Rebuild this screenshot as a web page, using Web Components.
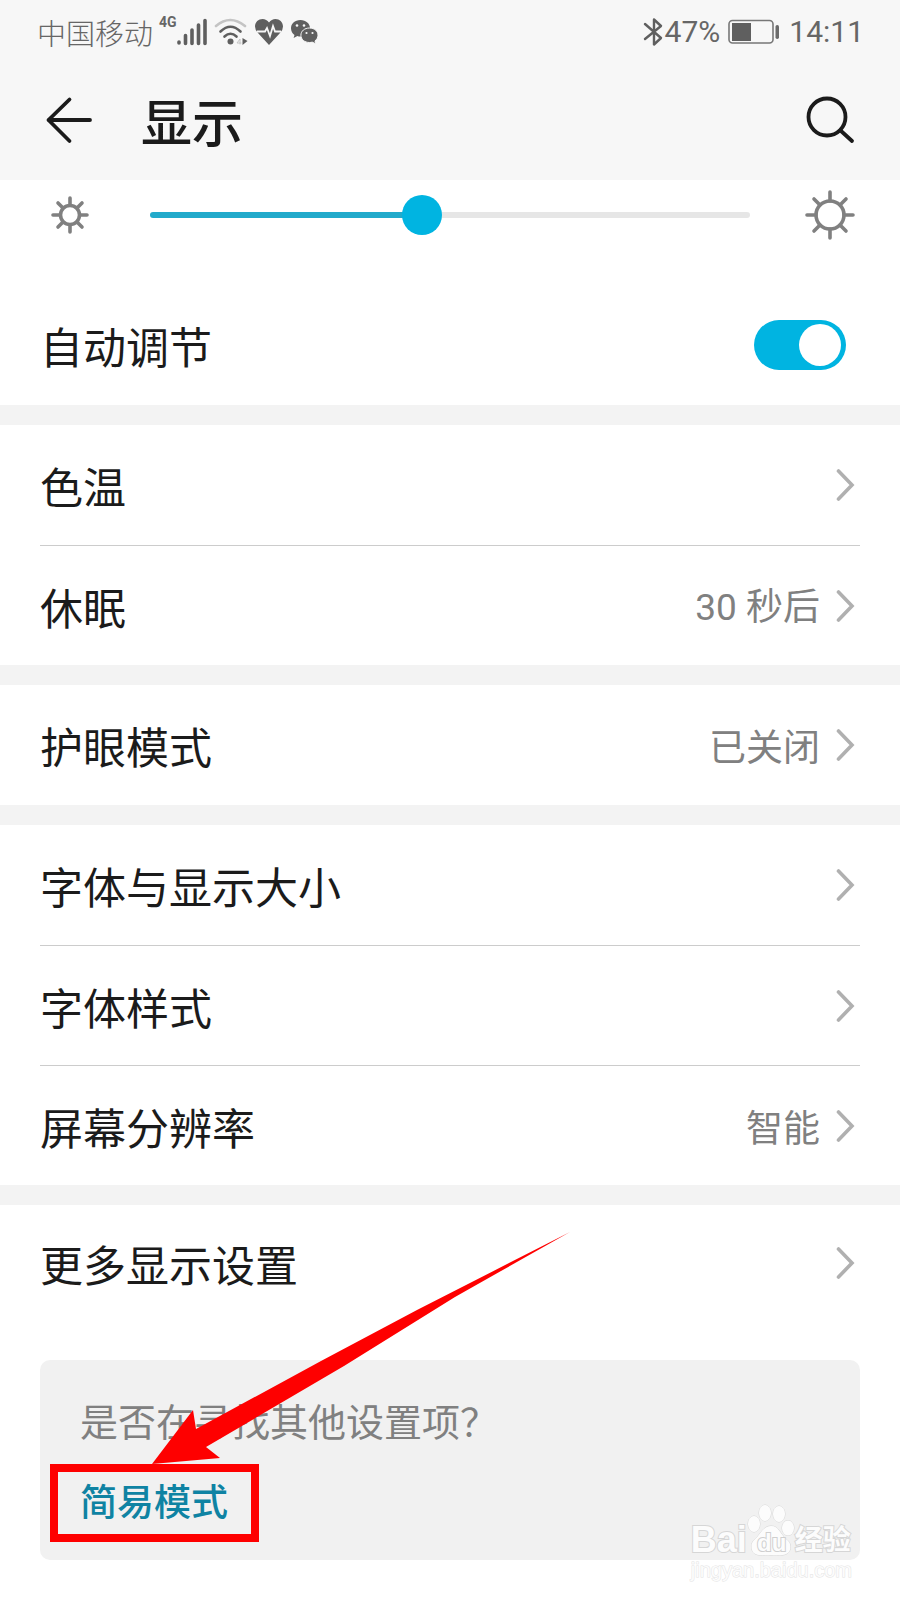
<!DOCTYPE html>
<html lang="zh-CN">
<head>
<meta charset="utf-8">
<meta name="viewport" content="width=device-width, initial-scale=1">
<title>显示</title>
<style>
  body {
    margin: 0;
    background: #fff;
    color: #1b1b1b;
    font-family: "Noto Sans CJK SC", sans-serif;
  }
</style>
</head>
<body>
<display-settings></display-settings>
<script>
customElements.define('status-bar', class StatusBar extends HTMLElement {
  constructor() {
    super();
    this.attachShadow({mode: 'open'})
    this.shadowRoot.innerHTML = this.template
  }

  get template() {
    return `<style>
      :host {
        display: flex;
        justify-content: space-between;
        box-sizing: border-box;
        height: 60px;
        padding: 3px 36px 0 37px;
        color: #666;
        font-size: 29px;
        font-weight: 300;
        line-height: 56px;
      }
      div { display: flex; align-items: center; }
      .net {
        align-self: flex-start;
        margin: 11px 0 0 6px;
        font-family: Roboto, sans-serif;
        font-size: 14px;
        font-weight: 700;
        line-height: 16px;
      }
      .icons { gap: 7px; }
      .battery { margin: 0 9px 0 8px; }
      .num { font-family: Roboto, sans-serif; font-size: 30px; font-weight: 400; }
      svg { display: block; flex: none; }
    </style>
    <div>
      <span>中国移动</span>
      <span class="net">4G</span>
      <div class="icons">
        <svg width="30" height="28" viewBox="0 0 30 28" stroke="#5f5f5f" stroke-width="3.6" stroke-linecap="round">
          <path d="M2 25v-1M8.500 25.500v-8M15 25.500V12M21.500 25.500V7M28 25.500V2.500"/>
        </svg>
        <svg width="34" height="28" viewBox="0 0 34 28" fill="none" stroke-linecap="round" stroke-width="2.600">
          <path d="M2 8Q16 -4 31 8" stroke="#c4c4c4"/>
          <path d="M6.500 13.500Q16.500 4 26.500 13.500M10.500 18.500Q16.500 13 22.500 18.500" stroke="#5f5f5f"/>
          <circle cx="16.500" cy="23.500" r="3" fill="#5f5f5f"/>
          <path d="M26 26v-5l-3 4h4" stroke="#c4c4c4" stroke-width="1"/>
          <path d="M28.500 20v7l5-4z" fill="#5f5f5f"/>
        </svg>
        <svg width="28" height="26" viewBox="0 0 28 26">
          <path d="M14 26L3 14Q0 11 0 7.500C0 3 3.500 0 7.500 0Q11.500 0 14 3.500Q16.500 0 20.500 0C24.500 0 28 3 28 7.500Q28 11 25 14z" fill="#5f5f5f"/>
          <path d="M2 12.500h8l2-3.500 3 8 3-10 2 5.500h6" fill="none" stroke="#f7f7f7" stroke-width="1.800"/>
        </svg>
        <svg width="29" height="26" viewBox="0 0 29 26">
          <path d="M10.500 1C4.500 1 1 4.800 1 9.300c0 3 1.400 5.300 3.500 6.700L3.600 19l3.800-2q1.600.6 3.600.5C16 17.500 20 14 20 9.300S16 1 10.500 1z" fill="#5f5f5f"/>
          <path d="M19.500 9c5 0 8.500 3.200 8.500 7.200 0 2.500-1.300 4.400-3 5.700l.6 2.900-3.400-1.700q-1.200.4-2.700.4c-5 0-8.600-3.200-8.600-7.300S14.500 9 19.500 9z" fill="#5f5f5f" stroke="#f7f7f7"/>
          <g fill="#f7f7f7"><circle cx="7" cy="6.500" r="1.300"/><circle cx="14" cy="6.500" r="1.300"/><circle cx="16.500" cy="14" r="1.100"/><circle cx="22.500" cy="14" r="1.100"/></g>
        </svg>
      </div>
    </div>
    <div>
      <svg width="22" height="30" viewBox="0 0 22 30" fill="none" stroke="#5f5f5f" stroke-width="2.400" stroke-linejoin="round" stroke-linecap="round">
        <path d="M2 7l16 14-7 6.500v-25L18 9 2 22"/>
      </svg>
      <span class="num">47%</span>
      <svg class="battery" width="52" height="26" viewBox="0 0 52 26">
        <rect x="1" y="1.500" width="44" height="22.500" rx="3.500" fill="none" stroke="#777" stroke-width="1.600"/>
        <path d="M4 4h19v18H4z" fill="#5f5f5f"/>
        <rect x="47.500" y="6" width="3.500" height="14" rx="1.700" fill="#6a6a6a"/>
      </svg>
      <span class="num">14:11</span>
    </div>`
  }
});

customElements.define('page-header', class PageHeader extends HTMLElement {
  constructor() {
    super();
    this.attachShadow({mode: 'open'})
    this.shadowRoot.innerHTML = this.template
  }

  get template() {
    return `<style>
      :host {
        display: flex;
        align-items: center;
        height: 120px;
        padding: 0 40px;
      }
      h1 {
        flex: 1;
        margin: 0 0 0 45px;
        font-size: 51px;
        font-weight: 500;
        line-height: 60px;
      }
      button {
        width: 56px;
        height: 56px;
        padding: 0;
        border: 0;
        background: none;
      }
      svg { display: block; }
    </style>
    <button type="button" aria-label="返回">
      <svg width="56" height="56" viewBox="0 0 56 56" fill="none" stroke="#1b1b1b" stroke-width="3.800" stroke-linecap="round" stroke-linejoin="round">
        <path d="M29.500 7.500L8.500 28l21 21M8.500 28H50"/>
      </svg>
    </button>
    <h1><slot></slot></h1>
    <button type="button" aria-label="搜索">
      <svg width="56" height="56" viewBox="0 0 56 56" fill="none" stroke="#1b1b1b" stroke-width="3.800" stroke-linecap="round">
        <circle cx="23" cy="25" r="18.500"/>
        <path d="M36.500 38.500L48 49"/>
      </svg>
    </button>`
  }
});

customElements.define('brightness-slider', class BrightnessSlider extends HTMLElement {
  constructor() {
    super();
    this.attachShadow({mode: 'open'})
    this.shadowRoot.innerHTML = this.template
  }

  connectedCallback() {
    const input = this.shadowRoot.querySelector('input')
    input.addEventListener('input', () => {
      input.style.setProperty('--fill', `${input.value}%`)
    })
  }

  get template() {
    return `<style>
      :host {
        display: flex;
        align-items: center;
        gap: 55px;
        height: 70px;
        padding: 0 45px;
      }
      svg { flex: none; stroke: #808080; fill: none; stroke-linecap: round; }
      input {
        --fill: 45%;
        flex: 1;
        min-width: 0;
        height: 40px;
        margin: 0;
        appearance: none;
        background: none;
      }
      input::-webkit-slider-runnable-track {
        height: 6px;
        border-radius: 3px;
        background: linear-gradient(to right, #22aacb var(--fill), #e6e6e6 var(--fill));
      }
      input::-webkit-slider-thumb {
        appearance: none;
        width: 40px;
        height: 40px;
        margin-top: -17px;
        border-radius: 50%;
        background: #00b4e1;
      }
    </style>
    <svg width="50" height="50" viewBox="0 0 50 50" stroke-width="3.600">
      <circle cx="25" cy="25" r="9.500"/>
      <path d="M25 8v7M25 35v7M8 25h7M35 25h7M13 13l5 5M32 32l5 5M13 37l5-5M32 18l5-5"/>
    </svg>
    <input type="range" min="0" max="100" value="45" aria-label="亮度">
    <svg width="50" height="50" viewBox="0 0 50 50" stroke-width="3.600">
      <circle cx="25" cy="25" r="14"/>
      <path d="M25 2v9M25 39v9M2 25h9M39 25h9M9 9l6 6M35 35l6 6M9 41l6-6M35 15l6-6"/>
    </svg>`
  }
});

customElements.define('switch-row', class SwitchRow extends HTMLElement {
  constructor() {
    super();
    this.attachShadow({mode: 'open'})
    this.shadowRoot.innerHTML = this.template
  }

  get template() {
    return `<style>
      :host {
        display: block;
        padding: 0 54px 0 40px;
      }
      label {
        display: flex;
        align-items: center;
        justify-content: space-between;
        height: 120px;
        font-size: 43px;
        line-height: 60px;
      }
      input {
        display: flex;
        align-items: center;
        box-sizing: border-box;
        width: 92px;
        height: 50px;
        margin: 0;
        padding: 0 5px;
        appearance: none;
        border-radius: 25px;
        background: #ccc;
      }
      input::before {
        content: '';
        width: 42px;
        height: 42px;
        border-radius: 50%;
        background: #fff;
      }
      input:checked {
        justify-content: flex-end;
        background: #00b4e1;
      }
    </style>
    <label><slot></slot><input type="checkbox" role="switch" checked></label>`
  }
});

customElements.define('settings-row', class SettingsRow extends HTMLElement {
  constructor() {
    super();
    this.attachShadow({mode: 'open'})
    this.shadowRoot.innerHTML = this.template
  }

  get template() {
    return `<style>
      :host {
        display: block;
        margin: 0 40px;
      }
      :host(:not(:first-child)) a { border-top: 1px solid #ccc; }
      :host([compact]) a { height: 115px; }
      a {
        display: flex;
        align-items: center;
        box-sizing: border-box;
        height: 120px;
        color: inherit;
        font-size: 43px;
        line-height: 60px;
        text-decoration: none;
      }
      .name { flex: 1; }
      .value { color: #808080; font-size: 37px; }
      svg { flex: none; margin-left: 16px; }
    </style>
    <a href="#">
      <span class="name"><slot></slot></span>
      <span class="value"><slot name="value"></slot></span>
      <svg width="24" height="36" viewBox="0 0 24 36" fill="none" stroke="#b0b0b0" stroke-width="3.600" stroke-linecap="round">
        <path d="M2.500 4L16 18 2.500 32"/>
      </svg>
    </a>`
  }
});

customElements.define('settings-group', class SettingsGroup extends HTMLElement {
  constructor() {
    super();
    this.attachShadow({mode: 'open'})
    this.shadowRoot.innerHTML = `<style>
      :host {
        display: block;
        border-top: 20px solid #f3f3f3;
      }
    </style>
    <slot></slot>`
  }
});

customElements.define('suggestion-card', class SuggestionCard extends HTMLElement {
  constructor() {
    super();
    this.attachShadow({mode: 'open'})
    this.shadowRoot.innerHTML = this.template
  }

  get template() {
    return `<style>
      :host {
        display: flex;
        flex-direction: column;
        align-items: flex-start;
        gap: 20px;
        position: relative;
        margin: 40px 40px 0;
        padding: 30px 40px;
        border-radius: 10px;
        background: #f1f1f1;
        line-height: 60px;
      }
      p { margin: 0; color: #808080; font-size: 38px; }
      a { color: #0f83a3; font-size: 37px; font-weight: 500; text-decoration: none; }
      /* red arrow and frame, laid over the card and the row above */
      svg {
        position: absolute;
        left: 0;
        top: -128px;
        pointer-events: none;
      }
    </style>
    <p><slot></slot></p>
    <a href="#"><slot name="link"></slot></a>
    <svg width="540" height="320" viewBox="0 0 540 320">
      <path d="M530 0L377 78 281 129 156 197 153 178 112 232 180 226 166 215 304 134 415 65z" fill="#fe0000"/>
      <rect x="14" y="236" width="201" height="70" fill="none" stroke="#fe0000" stroke-width="8"/>
    </svg>`
  }
});

customElements.define('baidu-mark', class BaiduMark extends HTMLElement {
  constructor() {
    super();
    this.attachShadow({mode: 'open'})
    this.shadowRoot.innerHTML = this.template
  }

  get template() {
    return `<style>
      :host {
        display: block;
        color: #fcfcfc;
        font-family: "Liberation Sans", "Noto Sans CJK SC", sans-serif;
        -webkit-text-stroke: 2px #d6d6d6;
        paint-order: stroke fill;
      }
      .brand {
        display: flex;
        align-items: flex-end;
        font-size: 36px;
        font-weight: 700;
        line-height: 36px;
      }
      .cn { font-size: 28px; line-height: 34px; }
      .url {
        font-size: 20px;
        line-height: 24px;
        -webkit-text-stroke: 1px #e4e4e4;
      }
      svg { display: block; }
      svg text {
        font-size: 24px;
        font-weight: 700;
        -webkit-text-stroke: 0;
        stroke: #cfcfcf;
        stroke-width: 2px;
      }
    </style>
    <div class="brand">
      <span>Bai</span>
      <svg width="48" height="56" viewBox="0 0 48 56" fill="#fcfcfc" stroke="#d6d6d6">
        <ellipse cx="7" cy="22" rx="6" ry="8"/>
        <ellipse cx="18" cy="11" rx="6" ry="8"/>
        <ellipse cx="32" cy="12" rx="6" ry="8"/>
        <ellipse cx="41" cy="26" rx="6" ry="7.500"/>
        <path d="M24 24C16 24 14 32 8 37 4 41 4 44 5 48c2 7 12 5 19 5s16 2 19-5c1-5 0-8-4-11-6-5-7-13-15-13z"/>
        <text x="10" y="49">du</text>
      </svg>
      <span class="cn">经验</span>
    </div>
    <div class="url">jingyan.baidu.com</div>`
  }
});

customElements.define('display-settings', class DisplaySettings extends HTMLElement {
  constructor() {
    super();
    this.attachShadow({mode: 'open'})
    this.shadowRoot.innerHTML = this.template
  }

  get template() {
    return `<style>
      :host {
        display: block;
        position: relative;
        padding-bottom: 40px;
      }
      header { background: #f7f7f7; }
      switch-row { margin-top: 35px; }
      .num { font-family: Roboto, sans-serif; }
      baidu-mark {
        position: absolute;
        right: 48px;
        bottom: 18px;
      }
    </style>
    <header>
      <status-bar></status-bar>
      <page-header>显示</page-header>
    </header>
    <main>
      <brightness-slider></brightness-slider>
      <switch-row>自动调节</switch-row>
      <settings-group>
        <settings-row>色温</settings-row>
        <settings-row>休眠<span slot="value"><span class="num">30 </span>秒后</span></settings-row>
      </settings-group>
      <settings-group>
        <settings-row>护眼模式<span slot="value">已关闭</span></settings-row>
      </settings-group>
      <settings-group>
        <settings-row>字体与显示大小</settings-row>
        <settings-row>字体样式</settings-row>
        <settings-row>屏幕分辨率<span slot="value">智能</span></settings-row>
      </settings-group>
      <settings-group>
        <settings-row compact>更多显示设置</settings-row>
      </settings-group>
      <suggestion-card>是否在寻找其他设置项？<span slot="link">简易模式</span></suggestion-card>
    </main>
    <baidu-mark></baidu-mark>`
  }
});
</script>
</body>
</html>
